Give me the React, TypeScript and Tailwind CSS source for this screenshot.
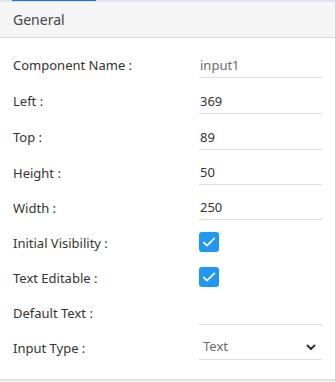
import React from "react";

const Field = ({ value, muted }: { value: string; muted?: boolean }) => (
  <div
    className={`flex h-[27px] w-[123px] items-center border-b border-[#dcdcdc] pl-[1px] pt-[4px] ${
      muted ? "text-[#6b6b6b]" : "text-[#333]"
    }`}
  >
    {value}
  </div>
);

const Check = () => (
  <div className="flex h-[20px] w-[20px] items-center justify-center rounded-[3px] bg-[#2196f3]">
    <svg width="16" height="16" viewBox="0 0 24 24" fill="none" stroke="white" strokeWidth="2.6" strokeLinecap="round" strokeLinejoin="round">
      <path d="M4 12.5l5 5L20 6.5" />
    </svg>
  </div>
);

const Row = ({ label, h, children }: { label: string; h: string; children?: React.ReactNode }) => (
  <div className={`flex items-center ${h}`}>
    <div className="w-[199px] pl-[13px] pt-[4px] text-[#333]">{label}</div>
    <div className="flex items-center">{children}</div>
  </div>
);

export default function App() {
  return (
    <div
      className="h-[382px] w-[335px] bg-white text-[13px]"
      style={{ fontFamily: '"Noto Sans", "Open Sans", sans-serif' }}
    >
      <div className="h-[1px] bg-[#dde4ec]">
        <div className="ml-[12px] h-[1px] w-[84px] bg-[#1976d2]" />
      </div>
      <div className="flex h-[37px] items-center border-t border-b border-[#dde4ec] border-b-[#dcdcdc] bg-[#f5f5f5] pl-[13px] text-[14px] text-[#444]">
        General
      </div>
      <div className="border-b-2 border-[#dedede] pb-[15px] pt-[8px]">
        <Row label="Component Name :" h="h-[36px]">
          <Field value="input1" muted />
        </Row>
        <Row label="Left :" h="h-[36px]">
          <Field value="369" />
        </Row>
        <Row label="Top :" h="h-[36px]">
          <Field value="89" />
        </Row>
        <Row label="Height :" h="h-[35px]">
          <Field value="50" />
        </Row>
        <Row label="Width :" h="h-[35px]">
          <Field value="250" />
        </Row>
        <Row label="Initial Visibility :" h="h-[35px]">
          <Check />
        </Row>
        <Row label="Text Editable :" h="h-[35px]">
          <Check />
        </Row>
        <Row label="Default Text :" h="h-[35px]">
          <Field value="" />
        </Row>
        <Row label="Input Type :" h="h-[35px]">
          <div className="flex h-[27px] w-[123px] items-center justify-between border-b border-[#dcdcdc] pl-[4px] pr-[6px] pt-[2px] text-[#6b6b6b]">
            <span>Text</span>
            <svg width="10" height="7" viewBox="0 0 10 7" fill="none" stroke="#333" strokeWidth="2" strokeLinecap="round" strokeLinejoin="round">
              <path d="M1.5 1.5L5 5l3.5-3.5" />
            </svg>
          </div>
        </Row>
      </div>
    </div>
  );
}
